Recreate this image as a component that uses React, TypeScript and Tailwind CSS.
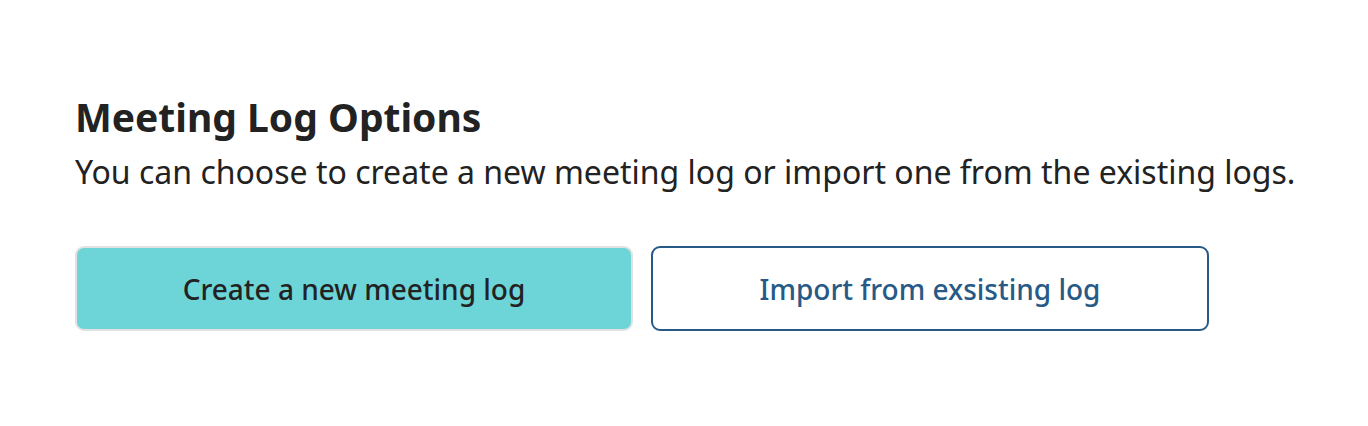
import React from 'react';

const App = () => {
  return (
    <div className="min-h-screen bg-white font-['Noto_Sans',sans-serif]">
      <section className="px-[75px] pt-[93px]">
        <h2 className="text-[39px] leading-[48px] font-bold text-[#222222]">Meeting Log Options</h2>
        <p className="mt-[9px] whitespace-nowrap text-[32px] leading-[44px] text-[#222222]">
          You can choose to create a new meeting log or import one from the existing logs.
        </p>
        <div className="mt-[52px] flex gap-[18px]">
          <button className="w-[558px] h-[85px] rounded-[9px] border-2 border-[#e2e2e2] bg-[#6dd5d8] text-[28px] font-medium text-[#222222]">
            Create a new meeting log
          </button>
          <button className="w-[558px] h-[85px] rounded-[9px] border-2 border-[#275a86] bg-white text-[28px] font-medium text-[#275a86]">
            Import from exsisting log
          </button>
        </div>
      </section>
    </div>
  );
};

export default App;
